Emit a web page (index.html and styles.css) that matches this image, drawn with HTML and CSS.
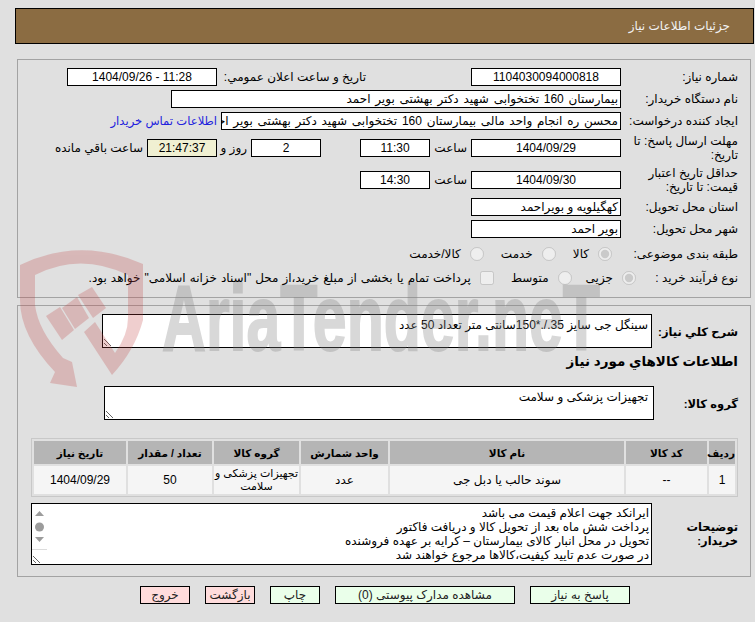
FILE: index.html
```html
<!DOCTYPE html>
<html lang="fa" dir="rtl">
<head>
<meta charset="utf-8">
<title>جزئیات اطلاعات نیاز</title>
<link rel="stylesheet" href="styles.css">
</head>
<body>
<header class="title"><span>جزئیات اطلاعات نیاز</span></header>

<section class="panel info">
  <div class="row">
    <span class="label">شماره نیاز:</span>
    <span class="field f150 num">1104030094000818</span>
    <span class="label pub">تاریخ و ساعت اعلان عمومي:</span>
    <span class="field f150 num" dir="ltr">1404/09/26 - 11:28</span>
  </div>
  <div class="row">
    <span class="label">نام دستگاه خریدار:</span>
    <span class="field f450 wide">بیمارستان 160 تختخوابی شهید دکتر بهشتی بویر احمد</span>
  </div>
  <div class="row">
    <span class="label">ایجاد کننده درخواست:</span>
    <span class="field f400 wide">محسن ره انجام واحد مالی بیمارستان 160 تختخوابی شهید دکتر بهشتی بویر احمد</span>
    <a class="contact" href="#">اطلاعات تماس خریدار</a>
  </div>
  <div class="row tall">
    <span class="label">مهلت ارسال پاسخ: تا تاریخ:</span>
    <span class="field f150 num">1404/09/29</span>
    <span class="unit">ساعت</span>
    <span class="field f70 num">11:30</span>
    <span class="spacer"></span>
    <span class="field f70 num">2</span>
    <span class="unit days">روز و</span>
    <span class="field f70 num clock">21:47:37</span>
    <span class="remain">ساعت باقي مانده</span>
  </div>
  <div class="row tall">
    <span class="label">حداقل تاریخ اعتبار قیمت: تا تاریخ:</span>
    <span class="field f150 num">1404/09/30</span>
    <span class="unit">ساعت</span>
    <span class="field f70 num">14:30</span>
  </div>
  <div class="row">
    <span class="label">استان محل تحویل:</span>
    <span class="field f150">کهگیلویه و بویراحمد</span>
  </div>
  <div class="row">
    <span class="label">شهر محل تحویل:</span>
    <span class="field f150">بویر احمد</span>
  </div>
  <div class="row choice first">
    <span class="label narrow-a">طبقه بندی موضوعی:</span>
    <label class="opt"><input type="radio" name="a" checked disabled>کالا</label>
    <label class="opt"><input type="radio" name="a" disabled>خدمت</label>
    <label class="opt"><input type="radio" name="a" disabled>کالا/خدمت</label>
  </div>
  <div class="row choice">
    <span class="label narrow-b">نوع فرآیند خرید :</span>
    <label class="opt tight"><input type="radio" name="b" checked disabled>جزیی</label>
    <label class="opt"><input type="radio" name="b" disabled>متوسط</label>
    <label class="opt spaced"><input type="checkbox" disabled>پرداخت تمام یا بخشی از مبلغ خرید،از محل "اسناد خزانه اسلامی" خواهد بود.</label>
  </div>
</section>

<section class="panel needs">
  <div class="desc-row">
    <span class="label bold">شرح كلي نياز:</span>
    <textarea class="box desc" readonly>سینگل جی سایز 35./.*150سانتی متر تعداد 50 عدد</textarea>
  </div>
  <h2 class="heading">اطلاعات كالاهاي مورد نياز</h2>
  <div class="group-row">
    <span class="label bold">گروه کالا:</span>
    <textarea class="box group" readonly>تجهیزات پزشکی و سلامت</textarea>
  </div>
  <table class="items">
    <colgroup>
      <col class="c1"><col class="c2"><col class="c3"><col class="c4"><col class="c5"><col class="c6"><col class="c7">
    </colgroup>
    <thead>
      <tr><th>ردیف</th><th>کد کالا</th><th>نام کالا</th><th>واحد شمارش</th><th>گروه کالا</th><th>تعداد / مقدار</th><th>تاریخ نیاز</th></tr>
    </thead>
    <tbody>
      <tr><td>1</td><td>--</td><td>سوند حالب یا دبل جی</td><td>عدد</td><td class="nowrap">تجهیزات پزشکی و<br>سلامت</td><td>50</td><td>1404/09/29</td></tr>
    </tbody>
  </table>
  <div class="notes-row">
    <span class="label bold notes-label">توضیحات خریدار:</span>
    <div class="notes-wrap">
      <textarea class="box notes" readonly>ایرانکد جهت اعلام قیمت می باشد
پرداخت شش ماه بعد از تحویل کالا و دریافت فاکتور
تحویل در محل انبار کالای بیمارستان – کرایه بر عهده فروشنده
در صورت عدم تایید کیفیت،کالاها مرجوع خواهند شد</textarea>
      <div class="scroll">
        <svg width="15" height="46" viewBox="0 0 15 46"><path class="sc" d="M3 12 L7.5 7 L12 12 Z"/><circle class="sc" cx="7.5" cy="23" r="4.5"/><path class="sc" d="M3 33 L12 33 L7.5 38 Z"/></svg>
      </div>
    </div>
  </div>
</section>

<footer class="actions">
  <button class="btn go reply">پاسخ به نیاز</button>
  <button class="btn go attach">مشاهده مدارک پیوستی (0)</button>
  <button class="btn go small">چاپ</button>
  <button class="btn stop small">بازگشت</button>
  <button class="btn stop small">خروج</button>
</footer>

<svg class="watermark" width="755" height="622" viewBox="0 0 755 622" aria-hidden="true">
  <g class="wm-red">
    <path fill-rule="evenodd" d="M20 265 Q80 236 143 264 L143 320 Q135 350 112 375 L84 332 L95 322 L115 353 Q128 335 128 318 L128 275 Q80 252 35 275 L35 305 Q38 330 63 358 L72 362 L77 387 L50 383 L55 372 Q20 335 20 300 Z"/>
    <path d="M46 316 L60 307 L74 330 L62 340 Z"/>
    <path d="M62 308 L77 297 L89 318 L75 329 Z"/>
    <path d="M78 295 L92 287 L106 308 L93 318 Z"/>
  </g>
  <text class="wm-text" x="162" y="350" textLength="438" lengthAdjust="spacingAndGlyphs">AriaTender.neT</text>
</svg>
</body>
</html>
```
FILE: styles.css
```css
* { box-sizing: border-box; }
html, body { margin: 0; padding: 0; }
body {
  position: relative;
  width: 755px;
  height: 622px;
  overflow: hidden;
  background: #e0e0e0;
  color: #000;
  font: 12px/14px "Liberation Sans", "DejaVu Sans", sans-serif;
  padding-top: 8px;
}
.title {
  height: 36px;
  margin: 0 1px 0 15px;
  padding: 0 23px 0 0;
  display: flex;
  align-items: center;
  background: #8b6c42;
  border: 1px solid #000;
  color: #f2f2f2;
}
.panel {
  margin: 0 4px 0 17px;
  border: 1px solid #a3a3a3;
}
.info {
  margin-top: 15px;
  height: 239px;
  padding: 8px 12px 0 0;
  display: flex;
  flex-direction: column;
  gap: 4px;
}
.needs {
  margin-top: 7px;
  height: 272px;
  padding: 8px 12px 0 0;
}
.row { display: flex; align-items: center; min-height: 18px; }
.row.tall { min-height: 28px; }
.label { width: 117px; flex: none; padding-left: 6px; line-height: 14px; }
.label.pub { width: 149px; margin-right: 105px; }
.label.bold { font-weight: bold; white-space: nowrap; padding-left: 0; }
.narrow-b { width: 102px; }
.field {
  flex: none;
  display: block;
  height: 18px;
  line-height: 16px;
  background: #fff;
  border: 1px solid #000;
  padding: 0 2px;
  white-space: nowrap;
  overflow: hidden;
}
.wide { word-spacing: 1.4px; }
.num { text-align: center; }
.f150 { width: 150px; }
.f450 { width: 450px; }
.f400 { width: 400px; }
.f70 { width: 70px; }
.clock { background: #f0f0d2; }
.contact { margin-right: 4px; color: #2222dd; font-size: 11.6px; text-decoration: none; white-space: nowrap; }
.unit { width: 41px; flex: none; padding-right: 4px; }
.unit.days { width: 34px; }
.spacer { width: 39px; flex: none; }
.remain { margin-right: 4px; white-space: nowrap; }
.choice { min-height: 20px; gap: 17px; }
.choice.first { margin-top: 2px; }
.choice .narrow-a { margin-left: -8px; }
.choice .narrow-b { margin-left: -17px; }
.opt { display: flex; align-items: center; gap: 9px; white-space: nowrap; }
.opt.tight { margin-left: -3px; }
.opt.spaced { word-spacing: .7px; }
.opt input { margin: 0; width: 14px; height: 14px; flex: none; accent-color: #bdbdbd; }
.desc-row { display: flex; height: 34px; }
.desc-row .label { width: 86px; padding-top: 11px; font-size: 11.5px; }
.box {
  display: block;
  border: 1px solid #000;
  background: #fff;
  font: inherit;
  color: #000;
  padding: 3px 3px;
  margin: 0;
  overflow: hidden;
  border-radius: 0;
  outline: none;
}
.desc { width: 550px; height: 34px; }
.heading { margin: 7px 0 0; height: 14px; font-size: 13.5px; line-height: 14px; font-weight: bold; }
.group-row { display: flex; height: 34px; margin-top: 17px; }
.group-row .label { width: 84px; padding-top: 11px; font-size: 11.5px; }
.group { width: 550px; height: 34px; padding: 3px 5px; }
.items {
  margin-top: 18px;
  width: 707px;
  table-layout: fixed;
  border-collapse: separate;
  border-spacing: 2px;
  border: 1px solid #c8c8c8;
}
.c1 { width: 26px; } .c2 { width: 81px; } .c3 { width: 234px; } .c4 { width: 87px; }
.c5 { width: 85px; } .c6 { width: 84px; } .c7 { width: 92px; }
.items th { height: 23px; padding: 0; background: #b5b5b5; font-size: 10.5px; font-weight: bold; white-space: nowrap; }
.items td { height: 28px; padding: 0; background: #f5f5f5; text-align: center; line-height: 13px; }
.items .nowrap { white-space: nowrap; font-size: 11px; }
.notes-row { display: flex; margin-top: 6px; height: 62px; }
.notes-row .label { width: 86px; padding-top: 17px; font-size: 11.5px; white-space: normal; }
.notes-wrap { position: relative; width: 621px; height: 62px; }
.notes { width: 621px; height: 62px; padding: 2px 2px 2px 18px; }
.scroll { position: absolute; left: 1px; top: 1px; width: 15px; height: 46px; background: #fff; border-bottom: 1px solid #dcdcdc; }
.scroll svg { display: block; }
.sc { fill: #9c9c9c; }
.actions { display: flex; margin: 9px 125px 0 0; }
.btn {
  height: 18px;
  padding: 0;
  border: 1px solid #000;
  border-radius: 0;
  font: inherit;
  line-height: 14px;
  color: #222;
  flex: none;
}
.go { background: #eaffea; }
.stop { background: #ffdcdc; }
.reply { width: 100px; margin-left: 15px; }
.attach { width: 180px; margin-left: 15px; }
.small { width: 50px; margin-left: 15px; }
.watermark { position: absolute; left: 0; top: 0; pointer-events: none; }
.wm-red { fill: #c04040; opacity: .25; }
.wm-text { font: bold 93px "Liberation Sans", sans-serif; fill: #808080; stroke: #808080; stroke-width: 2px; opacity: .3; direction: ltr; unicode-bidi: isolate; }
```
